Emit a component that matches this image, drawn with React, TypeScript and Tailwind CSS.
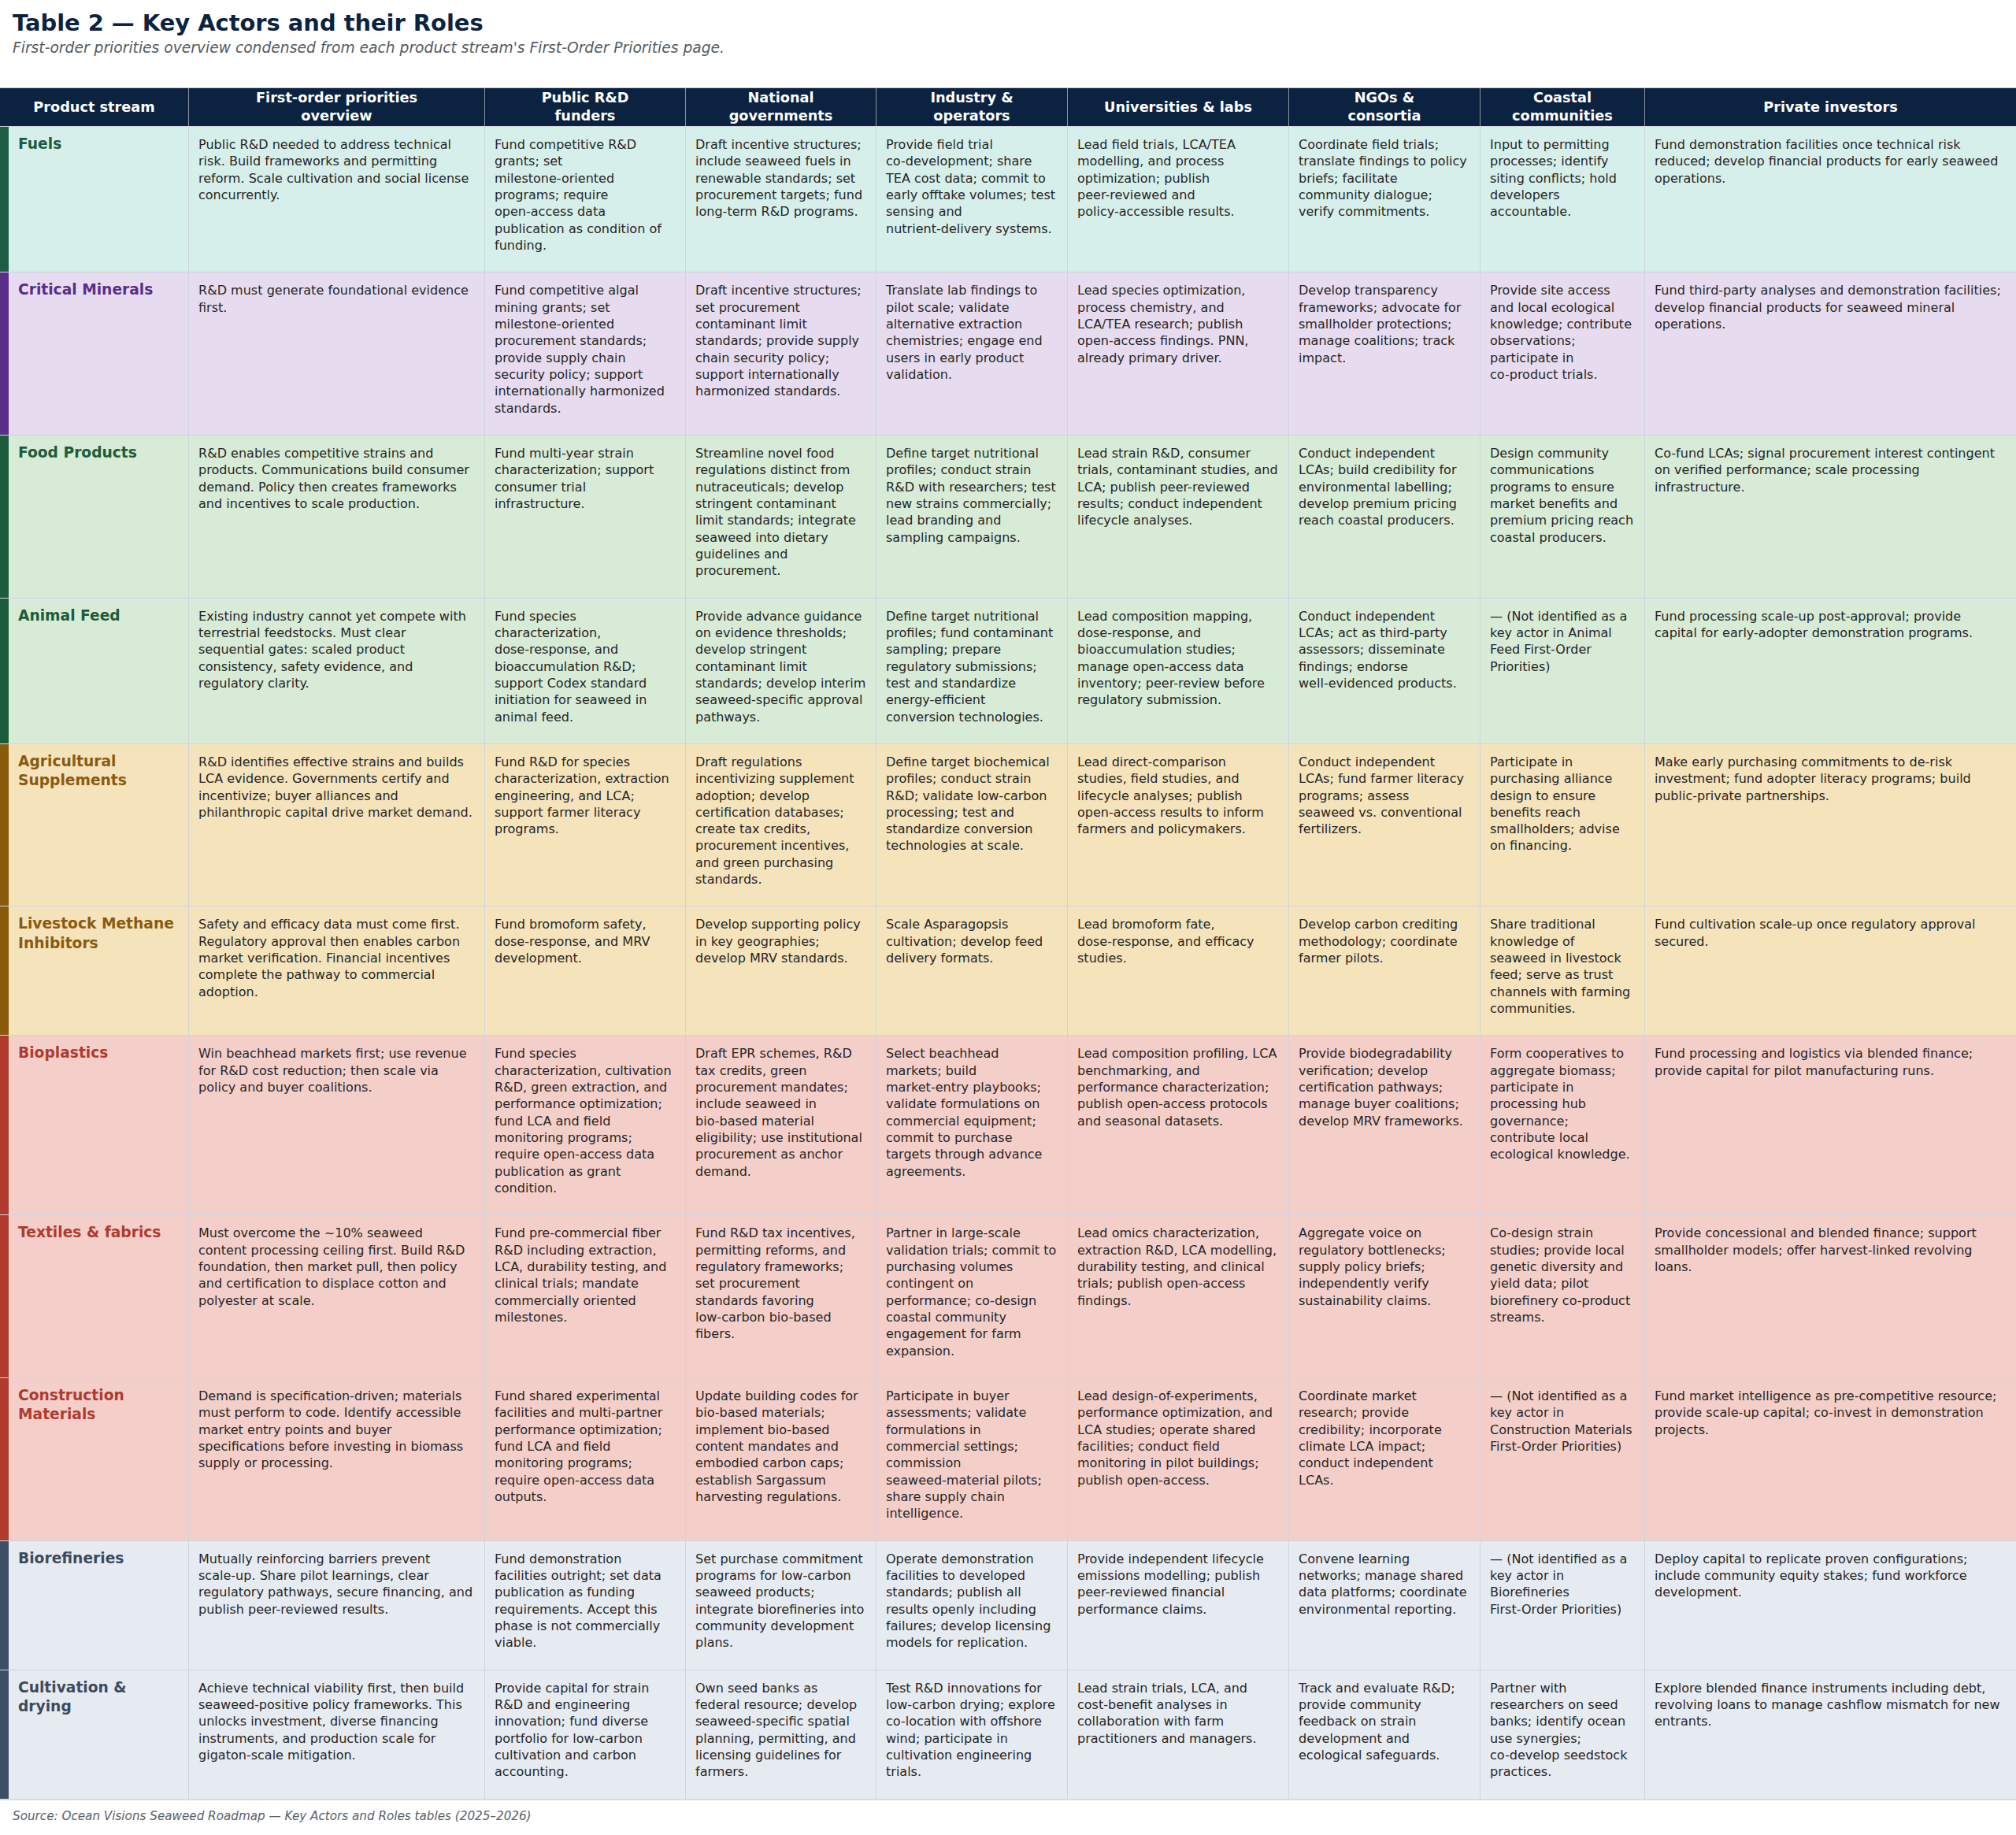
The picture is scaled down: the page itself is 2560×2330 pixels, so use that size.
import React from 'react';

type Theme = { bg: string; bar: string; text: string };

const themes: Record<string, Theme> = {
  teal: { bg: 'bg-[#d6efeb]', bar: 'border-l-[#1f5c45]', text: 'text-[#1f5a40]' },
  purple: { bg: 'bg-[#e7dcef]', bar: 'border-l-[#5b2d8a]', text: 'text-[#5b2d8a]' },
  green: { bg: 'bg-[#d7ebd7]', bar: 'border-l-[#1c5c3c]', text: 'text-[#1e5b3a]' },
  amber: { bg: 'bg-[#f5e3bb]', bar: 'border-l-[#8a5a0c]', text: 'text-[#8a5a10]' },
  red: { bg: 'bg-[#f4cfca]', bar: 'border-l-[#b03a2e]', text: 'text-[#b03a2e]' },
  slate: { bg: 'bg-[#e6ebf2]', bar: 'border-l-[#3d4f66]', text: 'text-[#3d4a5c]' },
};

const headerLines: string[][] = [
  ['Product stream'],
  ['First-order priorities', 'overview'],
  ['Public R&D', 'funders'],
  ['National', 'governments'],
  ['Industry &', 'operators'],
  ['Universities & labs'],
  ['NGOs &', 'consortia'],
  ['Coastal', 'communities'],
  ['Private investors'],
];

const rows: { name: string; theme: string; cells: string[] }[] = [
  {
    name: 'Fuels',
    theme: 'teal',
    cells: [
      'Public R&D needed to address technical risk. Build frameworks and permitting reform. Scale cultivation and social license concurrently.',
      'Fund competitive R&D grants; set milestone-oriented programs; require open-access data publication as condition of funding.',
      'Draft incentive structures; include seaweed fuels in renewable standards; set procurement targets; fund long-term R&D programs.',
      'Provide field trial co-development; share TEA cost data; commit to early offtake volumes; test sensing and nutrient-delivery systems.',
      'Lead field trials, LCA/TEA modelling, and process optimization; publish peer-reviewed and policy-accessible results.',
      'Coordinate field trials; translate findings to policy briefs; facilitate community dialogue; verify commitments.',
      'Input to permitting processes; identify siting conflicts; hold developers accountable.',
      'Fund demonstration facilities once technical risk reduced; develop financial products for early seaweed operations.',
    ],
  },
  {
    name: 'Critical Minerals',
    theme: 'purple',
    cells: [
      'R&D must generate foundational evidence first.',
      'Fund competitive algal mining grants; set milestone-oriented procurement standards; provide supply chain security policy; support internationally harmonized standards.',
      'Draft incentive structures; set procurement contaminant limit standards; provide supply chain security policy; support internationally harmonized standards.',
      'Translate lab findings to pilot scale; validate alternative extraction chemistries; engage end users in early product validation.',
      'Lead species optimization, process chemistry, and LCA/TEA research; publish open-access findings. PNN, already primary driver.',
      'Develop transparency frameworks; advocate for smallholder protections; manage coalitions; track impact.',
      'Provide site access and local ecological knowledge; contribute observations; participate in co-product trials.',
      'Fund third-party analyses and demonstration facilities; develop financial products for seaweed mineral operations.',
    ],
  },
  {
    name: 'Food Products',
    theme: 'green',
    cells: [
      'R&D enables competitive strains and products. Communications build consumer demand. Policy then creates frameworks and incentives to scale production.',
      'Fund multi-year strain characterization; support consumer trial infrastructure.',
      'Streamline novel food regulations distinct from nutraceuticals; develop stringent contaminant limit standards; integrate seaweed into dietary guidelines and procurement.',
      'Define target nutritional profiles; conduct strain R&D with researchers; test new strains commercially; lead branding and sampling campaigns.',
      'Lead strain R&D, consumer trials, contaminant studies, and LCA; publish peer-reviewed results; conduct independent lifecycle analyses.',
      'Conduct independent LCAs; build credibility for environmental labelling; develop premium pricing reach coastal producers.',
      'Design community communications programs to ensure market benefits and premium pricing reach coastal producers.',
      'Co-fund LCAs; signal procurement interest contingent on verified performance; scale processing infrastructure.',
    ],
  },
  {
    name: 'Animal Feed',
    theme: 'green',
    cells: [
      'Existing industry cannot yet compete with terrestrial feedstocks. Must clear sequential gates: scaled product consistency, safety evidence, and regulatory clarity.',
      'Fund species characterization, dose-response, and bioaccumulation R&D; support Codex standard initiation for seaweed in animal feed.',
      'Provide advance guidance on evidence thresholds; develop stringent contaminant limit standards; develop interim seaweed-specific approval pathways.',
      'Define target nutritional profiles; fund contaminant sampling; prepare regulatory submissions; test and standardize energy-efficient conversion technologies.',
      'Lead composition mapping, dose-response, and bioaccumulation studies; manage open-access data inventory; peer-review before regulatory submission.',
      'Conduct independent LCAs; act as third-party assessors; disseminate findings; endorse well-evidenced products.',
      '— (Not identified as a key actor in Animal Feed First-Order Priorities)',
      'Fund processing scale-up post-approval; provide capital for early-adopter demonstration programs.',
    ],
  },
  {
    name: 'Agricultural Supplements',
    theme: 'amber',
    cells: [
      'R&D identifies effective strains and builds LCA evidence. Governments certify and incentivize; buyer alliances and philanthropic capital drive market demand.',
      'Fund R&D for species characterization, extraction engineering, and LCA; support farmer literacy programs.',
      'Draft regulations incentivizing supplement adoption; develop certification databases; create tax credits, procurement incentives, and green purchasing standards.',
      'Define target biochemical profiles; conduct strain R&D; validate low-carbon processing; test and standardize conversion technologies at scale.',
      'Lead direct-comparison studies, field studies, and lifecycle analyses; publish open-access results to inform farmers and policymakers.',
      'Conduct independent LCAs; fund farmer literacy programs; assess\nseaweed vs. conventional fertilizers.',
      'Participate in purchasing alliance design to ensure benefits reach smallholders; advise on financing.',
      'Make early purchasing commitments to de-risk investment; fund adopter literacy programs; build public-private partnerships.',
    ],
  },
  {
    name: 'Livestock Methane Inhibitors',
    theme: 'amber',
    cells: [
      'Safety and efficacy data must come first. Regulatory approval then enables carbon market verification. Financial incentives complete the pathway to commercial adoption.',
      'Fund bromoform safety, dose-response, and MRV development.',
      'Develop supporting policy in key geographies; develop MRV standards.',
      'Scale Asparagopsis cultivation; develop feed delivery formats.',
      'Lead bromoform fate, dose-response, and efficacy studies.',
      'Develop carbon crediting methodology; coordinate farmer pilots.',
      'Share traditional knowledge of\nseaweed in livestock feed; serve as trust channels with farming communities.',
      'Fund cultivation scale-up once regulatory approval secured.',
    ],
  },
  {
    name: 'Bioplastics',
    theme: 'red',
    cells: [
      'Win beachhead markets first; use revenue for R&D cost reduction; then scale via policy and buyer coalitions.',
      'Fund species characterization, cultivation R&D, green extraction, and performance optimization; fund LCA and field monitoring programs; require open-access data publication as grant condition.',
      'Draft EPR schemes, R&D tax credits, green procurement mandates; include seaweed in bio-based material eligibility; use institutional procurement as anchor demand.',
      'Select beachhead markets; build market-entry playbooks; validate formulations on commercial equipment; commit to purchase targets through advance agreements.',
      'Lead composition profiling, LCA benchmarking, and performance characterization; publish open-access protocols and seasonal datasets.',
      'Provide biodegradability verification; develop certification pathways; manage buyer coalitions; develop MRV frameworks.',
      'Form cooperatives to aggregate biomass; participate in processing hub governance; contribute local ecological knowledge.',
      'Fund processing and logistics via blended finance; provide capital for pilot manufacturing runs.',
    ],
  },
  {
    name: 'Textiles & fabrics',
    theme: 'red',
    cells: [
      'Must overcome the ~10% seaweed content processing ceiling first. Build R&D foundation, then market pull, then policy and certification to displace cotton and polyester at scale.',
      'Fund pre-commercial fiber R&D including extraction, LCA, durability testing, and clinical trials; mandate commercially oriented milestones.',
      'Fund R&D tax incentives, permitting reforms, and regulatory frameworks; set procurement standards favoring low-carbon bio-based fibers.',
      'Partner in large-scale validation trials; commit to purchasing volumes contingent on performance; co-design coastal community engagement for farm expansion.',
      'Lead omics characterization, extraction R&D, LCA modelling, durability testing, and clinical trials; publish open-access findings.',
      'Aggregate voice on regulatory bottlenecks; supply policy briefs; independently verify sustainability claims.',
      'Co-design strain studies; provide local genetic diversity and yield data; pilot biorefinery co-product streams.',
      'Provide concessional and blended finance; support smallholder models; offer harvest-linked revolving loans.',
    ],
  },
  {
    name: 'Construction Materials',
    theme: 'red',
    cells: [
      'Demand is specification-driven; materials must perform to code. Identify accessible market entry points and buyer specifications before investing in biomass supply or processing.',
      'Fund shared experimental facilities and multi-partner performance optimization; fund LCA and field monitoring programs; require open-access data outputs.',
      'Update building codes for bio-based materials; implement bio-based content mandates and embodied carbon caps; establish Sargassum harvesting regulations.',
      'Participate in buyer assessments; validate formulations in commercial settings; commission seaweed-material pilots; share supply chain intelligence.',
      'Lead design-of-experiments, performance optimization, and LCA studies; operate shared facilities; conduct field monitoring in pilot buildings; publish open-access.',
      'Coordinate market research; provide credibility; incorporate climate LCA impact; conduct independent LCAs.',
      '— (Not identified as a key actor in Construction Materials First-Order Priorities)',
      'Fund market intelligence as pre-competitive resource; provide scale-up capital; co-invest in demonstration projects.',
    ],
  },
  {
    name: 'Biorefineries',
    theme: 'slate',
    cells: [
      'Mutually reinforcing barriers prevent scale-up. Share pilot learnings, clear regulatory pathways, secure financing, and publish peer-reviewed results.',
      'Fund demonstration facilities outright; set data publication as funding requirements. Accept this phase is not commercially viable.',
      'Set purchase commitment programs for low-carbon seaweed products; integrate biorefineries into community development plans.',
      'Operate demonstration facilities to developed standards; publish all results openly including failures; develop licensing models for replication.',
      'Provide independent lifecycle emissions modelling; publish peer-reviewed financial performance claims.',
      'Convene learning networks; manage shared data platforms; coordinate environmental reporting.',
      '— (Not identified as a key actor in Biorefineries First-Order Priorities)',
      'Deploy capital to replicate proven configurations; include community equity stakes; fund workforce development.',
    ],
  },
  {
    name: 'Cultivation & drying',
    theme: 'slate',
    cells: [
      'Achieve technical viability first, then build seaweed-positive policy frameworks. This unlocks investment, diverse financing instruments, and production scale for gigaton-scale mitigation.',
      'Provide capital for strain R&D and engineering innovation; fund diverse portfolio for low-carbon cultivation and carbon accounting.',
      'Own seed banks as\nfederal resource; develop seaweed-specific spatial planning, permitting, and licensing guidelines for farmers.',
      'Test R&D innovations for low-carbon drying; explore co-location with offshore wind; participate in cultivation engineering trials.',
      'Lead strain trials, LCA, and cost-benefit analyses in collaboration with farm practitioners and managers.',
      'Track and evaluate R&D; provide community feedback on strain development and ecological safeguards.',
      'Partner with researchers on seed banks; identify ocean use synergies; co-develop seedstock practices.',
      'Explore blended finance instruments including debt, revolving loans to manage cashflow mismatch for new entrants.',
    ],
  },
];

const cols = 'grid grid-cols-[240px_376px_255px_242px_243px_281px_243px_209px_471px]';

// hyphenated words never wrap at the hyphen in the source table; '\n' forces a break
const CellText = ({ text }: { text: string }) => (
  <>
    {text.split('\n').map((part, p) => (
      <React.Fragment key={p}>
        {p > 0 && <br />}
        {part.split(' ').map((w, i) => (
          <React.Fragment key={i}>
            {i > 0 && ' '}
            {w.includes('-') ? <span className="whitespace-nowrap">{w}</span> : w}
          </React.Fragment>
        ))}
      </React.Fragment>
    ))}
  </>
);

const App = () => {
  return (
    <div className="w-[2560px] bg-white font-['DejaVu_Sans',sans-serif] text-[#262626]">
      {/* Title */}
      <div className="px-4 pt-3">
        <h1 className="text-[28.9px] leading-[34px] font-bold text-[#0b2340]">
          Table 2 — Key Actors and their Roles
        </h1>
        <p className="mt-[2px] text-[18.7px] leading-[25px] italic text-[#555b62]">
          First-order priorities overview condensed from each product stream's First-Order Priorities page.
        </p>
      </div>

      {/* Table */}
      <div className="mt-[38px] border-t border-[#c8cdd2]">
        <div className={`${cols} bg-[#0b2340] h-[48px]`}>
          {headerLines.map((lines, i) => (
            <div
              key={i}
              className={`flex flex-col items-center justify-center text-center px-2 text-white font-bold text-[17.7px] leading-[22.7px] ${
                i < headerLines.length - 1 ? 'border-r border-[#8c949c]' : ''
              }`}
            >
              {lines.map(l => (
                <span key={l}>{l}</span>
              ))}
            </div>
          ))}
        </div>

        {rows.map(row => {
          const t = themes[row.theme];
          return (
            <div key={row.name} className={`${cols} ${t.bg} border-t border-[#cfd5dc]`}>
              <div className={`border-l-[11px] ${t.bar} border-r border-r-[#cdd6dc] pl-3 pr-3 pt-[10px] pb-6`}>
                <div className={`text-[18.67px] leading-[24.3px] font-bold ${t.text}`}>{row.name}</div>
              </div>
              {row.cells.map((c, i) => (
                <div
                  key={i}
                  className={`px-3 pt-3 pb-[23px] text-[16.05px] leading-[21.33px] ${
                    i < row.cells.length - 1 ? 'border-r border-[#cdd6dc]' : ''
                  }`}
                >
                  <CellText text={c} />
                </div>
              ))}
            </div>
          );
        })}
        <div className="h-[2px] bg-[#cfe0e0]" />
      </div>

      <p className="px-4 pt-[10px] pb-5 text-[15.2px] leading-[20px] italic text-[#5b6168]">
        Source: Ocean Visions Seaweed Roadmap — Key Actors and Roles tables (2025–2026)
      </p>
    </div>
  );
};

export default App;
